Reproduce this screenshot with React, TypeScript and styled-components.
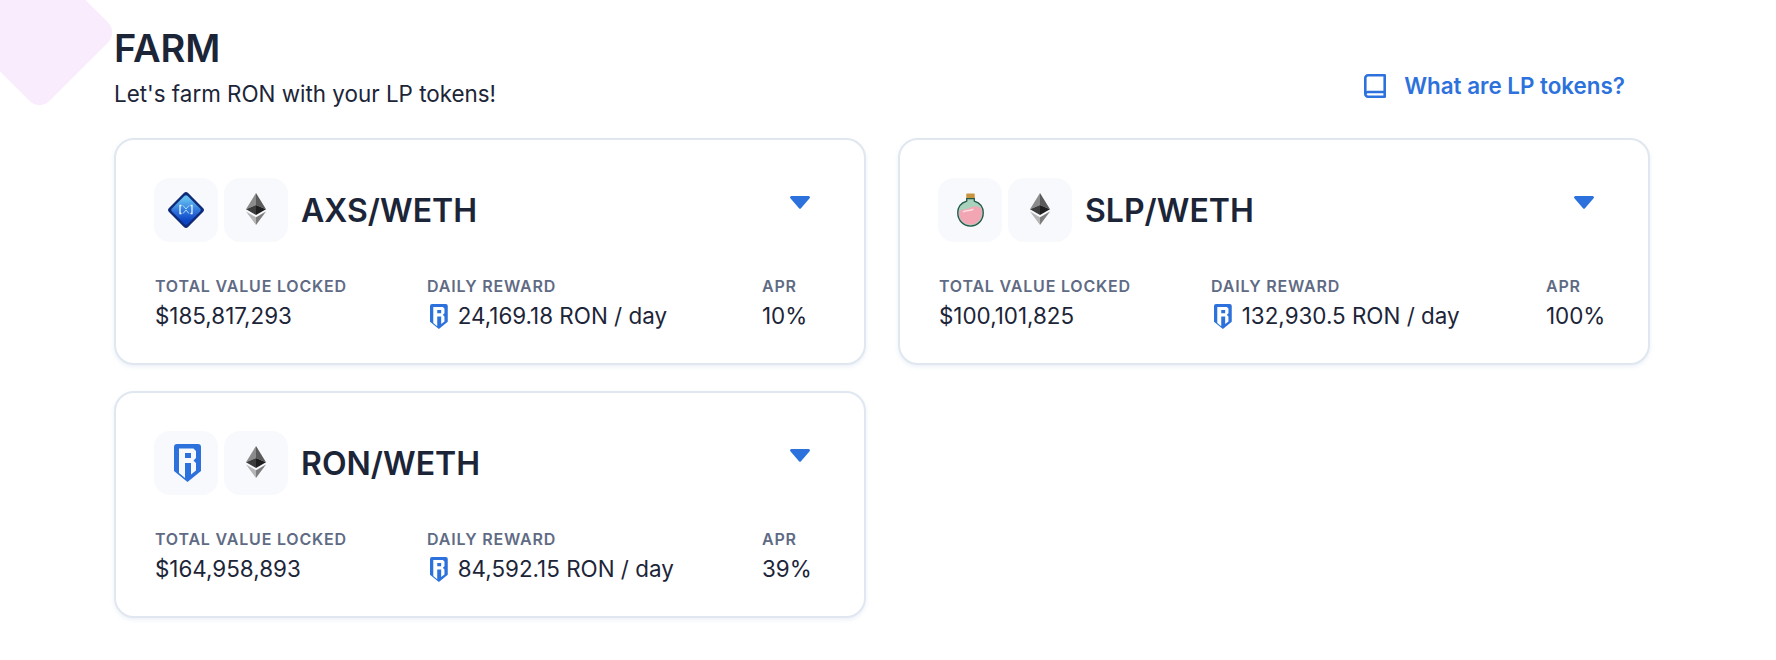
import React from "react";
import styled, { createGlobalStyle } from "styled-components";

const GlobalStyle = createGlobalStyle`
  html, body {
    margin: 0;
    padding: 0;
    background: #fff;
    font-family: Inter, "Liberation Sans", sans-serif;
    color: #1c2538;
  }
`;

const Page = styled.div`
  position: relative;
  width: 1776px;
  height: 660px;
  overflow: hidden;
  box-sizing: border-box;
  padding: 18px 126px 0 114px;
`;

const Blob = styled.div`
  position: absolute;
  left: -16px;
  top: -23px;
  width: 111px;
  height: 111px;
  border-radius: 14px;
  background: #f9ecfc;
  transform: rotate(45deg);
`;

const Header = styled.header`
  position: relative;
  display: flex;
  justify-content: space-between;
  align-items: flex-end;
  height: 90px;
  padding-bottom: 30px;
`;

const Title = styled.h1`
  margin: 0;
  font-size: 38px;
  line-height: 46px;
  font-weight: 600;
  color: #1c2538;
`;

const Subtitle = styled.p`
  margin: 9px 0 0;
  font-size: 22.4px;
  line-height: 28px;
  font-weight: 400;
  color: #1c2538;
`;

const HelpLink = styled.a`
  display: flex;
  align-items: center;
  gap: 18px;
  margin: 0 25px 8px 0;
  font-size: 22.4px;
  line-height: 28px;
  font-weight: 600;
  color: #2d72dc;
`;

const Grid = styled.div`
  position: relative;
  display: grid;
  grid-template-columns: 752px 752px;
  column-gap: 32px;
  row-gap: 26px;
`;

const Card = styled.article`
  box-sizing: border-box;
  height: 227px;
  padding: 38px 38px 0;
  border: 2px solid #e0e7f0;
  border-radius: 20px;
  background: #fff;
  box-shadow: 0 2px 4px rgba(200, 212, 232, 0.35);
`;

const CardTop = styled.div`
  display: flex;
  justify-content: space-between;
  align-items: flex-start;
  height: 64px;
`;

const Pair = styled.div`
  display: flex;
  align-items: center;
  gap: 6px;
`;

const Tile = styled.div`
  display: flex;
  align-items: center;
  justify-content: center;
  width: 64px;
  height: 64px;
  border-radius: 16px;
  background: #f7f9fc;
`;

const PairName = styled.h2`
  margin: 2px 0 0 7px;
  font-size: 32px;
  line-height: 40px;
  font-weight: 600;
  color: #1c2538;
`;

const Caret = styled.svg`
  display: block;
  margin: 18px 16px 0 0;
`;

const Stats = styled.div`
  display: grid;
  grid-template-columns: 272px 335px auto;
  margin-top: 33px;
  padding-left: 1px;
`;

const StatLabel = styled.div`
  font-size: 16px;
  line-height: 22px;
  font-weight: 600;
  letter-spacing: 0.8px;
  color: #5f6b84;
`;

const StatValue = styled.div`
  display: flex;
  align-items: center;
  gap: 10px;
  margin-top: 3px;
  font-size: 22.4px;
  line-height: 32px;
  color: #1c2538;
`;

const Shield = styled.svg`
  display: block;
  flex: none;
  margin-left: 3px;
`;

const RoninIcon = ({ height }: { height: number }) => (
  <Shield width={(height * 27) / 38} height={height} viewBox="0 0 27 38">
    <path
      fillRule="evenodd"
      fill="#2d72dc"
      d="M3 0h21a3 3 0 0 1 3 3v24L13.500 38 0 27V3a3 3 0 0 1 3-3zm2 4.500V29l6 5V19h6v11.500l5-4V19l-2.500-2.500L22 14V7l-2.500-2.500H5zM11 9h6v5h-6V9z"
    />
  </Shield>
);

const EthIcon = () => (
  <svg width="20" height="32" viewBox="0 0 20 32" style={{ marginTop: -2 }}>
    <polygon points="10,0 0,16.300 10,12" fill="#8b8b8b" />
    <polygon points="10,0 20,16.300 10,12" fill="#5b5b5b" />
    <polygon points="10,12 0,16.300 10,22" fill="#3c3c3c" />
    <polygon points="10,12 20,16.300 10,22" fill="#1e1e1e" />
    <polygon points="0,18.500 10,32 10,24.200" fill="#b5b5b5" />
    <polygon points="20,18.500 10,32 10,24.200" fill="#7d7d7d" />
  </svg>
);

const AxsIcon = () => (
  <svg width="38" height="38" viewBox="0 0 38 38">
    <defs>
      <linearGradient id="axsFill" x1="0" y1="0" x2="0" y2="1" gradientTransform="rotate(-45 .5 .5)">
        <stop offset="0" stopColor="#62bdf0" />
        <stop offset="0.55" stopColor="#2f74dc" />
        <stop offset="1" stopColor="#0c45c4" />
      </linearGradient>
    </defs>
    <rect x="5.500" y="5.500" width="27" height="27" rx="3" fill="#0e2a78" transform="rotate(45 19 19)" />
    <rect x="8" y="8" width="22" height="22" rx="2" fill="url(#axsFill)" transform="rotate(45 19 19)" />
    <path d="M14.500 14.500h-1.500v8h1.500M23.500 14.500h1.500v8h-1.500" stroke="#e6f6ff" strokeWidth="1.300" fill="none" />
    <path d="M16 14.500l3 3.500 3-3.500M16 22.500l3-3.500 3 3.500" stroke="#a8dcff" strokeWidth="1" fill="none" />
  </svg>
);

const SlpIcon = () => (
  <svg width="27" height="34" viewBox="0 0 28 36">
    <rect x="9.500" y="0.500" width="9" height="6" rx="1" fill="#c8943f" />
    <path d="M10 6h8v2.500c6 1.800 9.500 6.500 9.500 12.500 0 8-6 14-13.500 14S.500 29 .500 21C.500 15 4 10.300 10 8.500z" fill="#a9d2bd" stroke="#23584a" strokeWidth="1.400" />
    <path d="M2.500 19c4-3 7-1 11-3.500 4-2 8-2.500 12 1 .5 1.500.7 3 .7 4.500 0 7-5.500 12.500-12.200 12.500S1.800 28 1.800 21c0-.7.200-1.400.7-2z" fill="#f2a6b4" />
    <path d="M6 20c4-2 8-1 11-3" stroke="#fbdde2" strokeWidth="1.500" fill="none" />
  </svg>
);

const BookIcon = () => (
  <svg width="22" height="24" viewBox="0 0 22 24" fill="none" stroke="#2d72dc" strokeWidth="2.600" strokeLinejoin="round">
    <path d="M1.300 20V4A2.700 2.700 0 0 1 4 1.300h16.700v21.400H4A2.700 2.700 0 0 1 1.300 20z" />
    <path d="M1.300 20A2.700 2.700 0 0 1 4 18h16.700" />
  </svg>
);

type Farm = {
  name: string;
  icon: React.ReactNode;
  tvl: string;
  reward: string;
  apr: string;
};

const farms: Farm[] = [
  { name: "AXS/WETH", icon: <AxsIcon />, tvl: "$185,817,293", reward: "24,169.18 RON / day", apr: "10%" },
  { name: "SLP/WETH", icon: <SlpIcon />, tvl: "$100,101,825", reward: "132,930.5 RON / day", apr: "100%" },
  { name: "RON/WETH", icon: <RoninIcon height={38} />, tvl: "$164,958,893", reward: "84,592.15 RON / day", apr: "39%" },
];

const FarmCard = ({ farm }: { farm: Farm }) => (
  <Card>
    <CardTop>
      <Pair>
        <Tile>{farm.icon}</Tile>
        <Tile>
          <EthIcon />
        </Tile>
        <PairName>{farm.name}</PairName>
      </Pair>
      <Caret width="20" height="13" viewBox="0 0 20 13">
        <path d="M1.500 0h17a1.400 1.400 0 0 1 .9 2.500l-8.400 9.800a1.400 1.400 0 0 1-2 0L.6 2.500A1.400 1.400 0 0 1 1.500 0z" fill="#2d72dc" />
      </Caret>
    </CardTop>
    <Stats>
      <div>
        <StatLabel>TOTAL VALUE LOCKED</StatLabel>
        <StatValue>{farm.tvl}</StatValue>
      </div>
      <div>
        <StatLabel>DAILY REWARD</StatLabel>
        <StatValue>
          <RoninIcon height={25} />
          {farm.reward}
        </StatValue>
      </div>
      <div>
        <StatLabel>APR</StatLabel>
        <StatValue>{farm.apr}</StatValue>
      </div>
    </Stats>
  </Card>
);

export default function App() {
  return (
    <>
      <GlobalStyle />
      <Page>
        <Blob />
        <Header>
          <div>
            <Title>FARM</Title>
            <Subtitle>Let's farm RON with your LP tokens!</Subtitle>
          </div>
          <HelpLink>
            <BookIcon />
            What are LP tokens?
          </HelpLink>
        </Header>
        <Grid>
          {farms.map((farm) => (
            <FarmCard key={farm.name} farm={farm} />
          ))}
        </Grid>
      </Page>
    </>
  );
}
